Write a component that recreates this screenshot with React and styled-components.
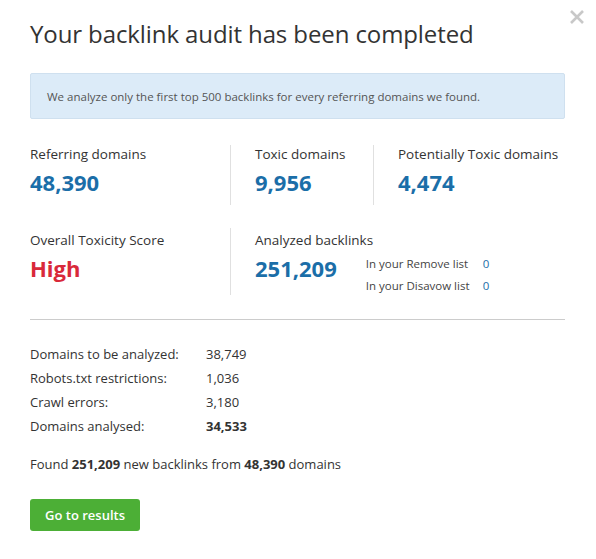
import React from 'react'
import styled, { createGlobalStyle } from 'styled-components'

const GlobalStyle = createGlobalStyle`
  body {
    margin: 0;
    background: #fff;
    font-family: "Open Sans", "Noto Sans", sans-serif;
    color: #333;
  }
`

const Modal = styled.div`
  position: relative;
  width: 596px;
  height: 559px;
  box-sizing: border-box;
  padding: 18px 31px 0 30px;
`

const Close = styled.button`
  position: absolute;
  top: 8px;
  right: 10px;
  width: 18px;
  height: 18px;
  padding: 0;
  border: 0;
  background: none;
  cursor: pointer;
  svg {
    display: block;
  }
`

const Title = styled.h1`
  margin: 0;
  font-size: 24px;
  line-height: 32px;
  font-weight: 500;
  color: #333;
  letter-spacing: -0.1px;
`

const Notice = styled.div`
  margin-top: 23px;
  height: 44px;
  display: flex;
  align-items: center;
  padding: 0 16px;
  background: #dcebf8;
  border: 1px solid #cfe0ef;
  border-radius: 2px;
  font-size: 11.5px;
  color: #555;
`

const StatsRow = styled.div`
  display: grid;
  grid-template-columns: ${p => p.$cols};
  margin-top: ${p => p.$top}px;
  min-height: ${p => p.$height}px;
`

const Stat = styled.div`
  padding-left: ${p => (p.$first ? 0 : 24)}px;
  padding-top: ${p => p.$pad || 0}px;
  border-left: ${p => (p.$first ? 'none' : '1px solid #e0e0e0')};
`

const Label = styled.div`
  font-size: 13.5px;
  line-height: 18px;
  color: #333;
`

const Value = styled.div`
  margin-top: 5px;
  font-size: 22px;
  line-height: 28px;
  font-weight: 700;
  color: ${p => p.$color || '#1b6ea8'};
`

const ValueLine = styled.div`
  display: flex;
  align-items: flex-start;
  gap: 29px;
`

const SubList = styled.div`
  display: grid;
  grid-template-columns: 117px auto;
  row-gap: 4px;
  margin-top: 6px;
  font-size: 11.5px;
  line-height: 18px;
  color: #444;
`

const SubCount = styled.span`
  color: #1b6ea8;
`

const Divider = styled.hr`
  margin: 24px 0 0;
  border: 0;
  border-top: 1px solid #ccc;
`

const Details = styled.dl`
  display: grid;
  grid-template-columns: 176px auto;
  margin: 22px 0 0;
  font-size: 13px;
  line-height: 24px;
  color: #333;
  dt, dd {
    margin: 0;
  }
`

const Summary = styled.p`
  margin: 14px 0 0;
  font-size: 13px;
  line-height: 24px;
  color: #333;
`

const Button = styled.button`
  margin-top: 23px;
  height: 32px;
  padding: 0 15px;
  border: 0;
  border-radius: 3px;
  background: #4caf36;
  color: #fff;
  font-family: inherit;
  font-size: 13px;
  font-weight: 600;
  cursor: pointer;
`

export default function App() {
  return (
    <>
      <GlobalStyle />
      <Modal>
        <Close aria-label="Close">
          <svg width="18" height="18" viewBox="0 0 18 18">
            <path d="M3 3 L15 15 M15 3 L3 15" stroke="#c8c8c8" strokeWidth="2.6" />
          </svg>
        </Close>
        <Title>Your backlink audit has been completed</Title>
        <Notice>We analyze only the first top 500 backlinks for every referring domains we found.</Notice>

        <StatsRow $cols="200px 143px 1fr" $top={26} $height={60}>
          <Stat $first>
            <Label>Referring domains</Label>
            <Value>48,390</Value>
          </Stat>
          <Stat>
            <Label>Toxic domains</Label>
            <Value>9,956</Value>
          </Stat>
          <Stat>
            <Label>Potentially Toxic domains</Label>
            <Value>4,474</Value>
          </Stat>
        </StatsRow>

        <StatsRow $cols="200px 1fr" $top={23} $height={67}>
          <Stat $first $pad={3}>
            <Label>Overall Toxicity Score</Label>
            <Value $color="#d9293a">High</Value>
          </Stat>
          <Stat $pad={3}>
            <Label>Analyzed backlinks</Label>
            <ValueLine>
              <Value>251,209</Value>
              <SubList>
                <span>In your Remove list</span>
                <SubCount>0</SubCount>
                <span>In your Disavow list</span>
                <SubCount>0</SubCount>
              </SubList>
            </ValueLine>
          </Stat>
        </StatsRow>

        <Divider />

        <Details>
          <dt>Domains to be analyzed:</dt>
          <dd>38,749</dd>
          <dt>Robots.txt restrictions:</dt>
          <dd>1,036</dd>
          <dt>Crawl errors:</dt>
          <dd>3,180</dd>
          <dt>Domains analysed:</dt>
          <dd><b>34,533</b></dd>
        </Details>

        <Summary>
          Found <b>251,209</b> new backlinks from <b>48,390</b> domains
        </Summary>

        <Button>Go to results</Button>
      </Modal>
    </>
  )
}
